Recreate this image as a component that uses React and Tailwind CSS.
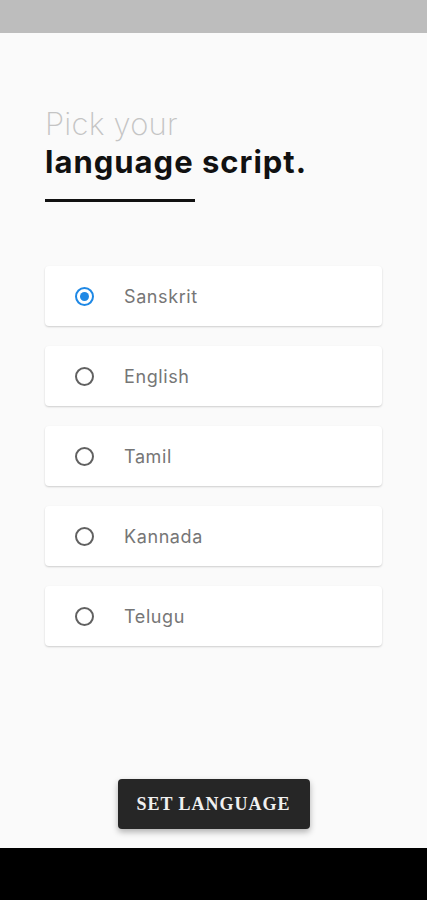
import React, { useState } from "react";

const LANGS = ["Sanskrit", "English", "Tamil", "Kannada", "Telugu"];

function Radio({ checked }) {
  return (
    <span
      className={
        "flex h-[19px] w-[19px] items-center justify-center rounded-full border-2 " +
        (checked ? "border-[#1e88e5]" : "border-[#616161]")
      }
    >
      {checked && <span className="h-[9px] w-[9px] rounded-full bg-[#1e88e5]" />}
    </span>
  );
}

export default function App() {
  const [lang, setLang] = useState("Sanskrit");
  return (
    <div className="flex h-[900px] w-[427px] flex-col bg-[#fafafa] font-['Inter','Lato',sans-serif]">
      <div className="h-[33px] bg-[#bdbdbd]" />
      <div className="flex flex-1 flex-col px-[45px] pt-[72px]">
        <div className="text-[31px] font-extralight leading-[38px] tracking-[0.2px] text-[#c4c4c4]">Pick your</div>
        <div className="text-[31px] font-bold leading-[38px] tracking-[1px] text-[#111]">language script.</div>
        <div className="mt-[18px] h-[3px] w-[150px] bg-[#111]" />

        <div className="mt-[64px] flex w-[337px] flex-col gap-[20px]">
          {LANGS.map(l => (
            <button
              key={l}
              onClick={() => setLang(l)}
              className="flex h-[60px] items-center rounded-[4px] bg-white pl-[30px] text-left shadow-[0_1px_2px_rgba(0,0,0,0.18)]"
            >
              <Radio checked={lang === l} />
              <span className="ml-[30px] text-[18px] tracking-[0.6px] text-[#767676]">{l}</span>
            </button>
          ))}
        </div>

        <div className="mt-auto mb-[19px] flex justify-center">
          <button className="h-[50px] w-[192px] rounded-[4px] bg-[#262626] font-['Liberation_Serif',serif] text-[18px] font-bold tracking-[1px] text-[#f0f0f0] shadow-[0_3px_6px_rgba(0,0,0,0.3)]">
            SET LANGUAGE
          </button>
        </div>
      </div>
      <div className="h-[52px] bg-black" />
    </div>
  );
}
